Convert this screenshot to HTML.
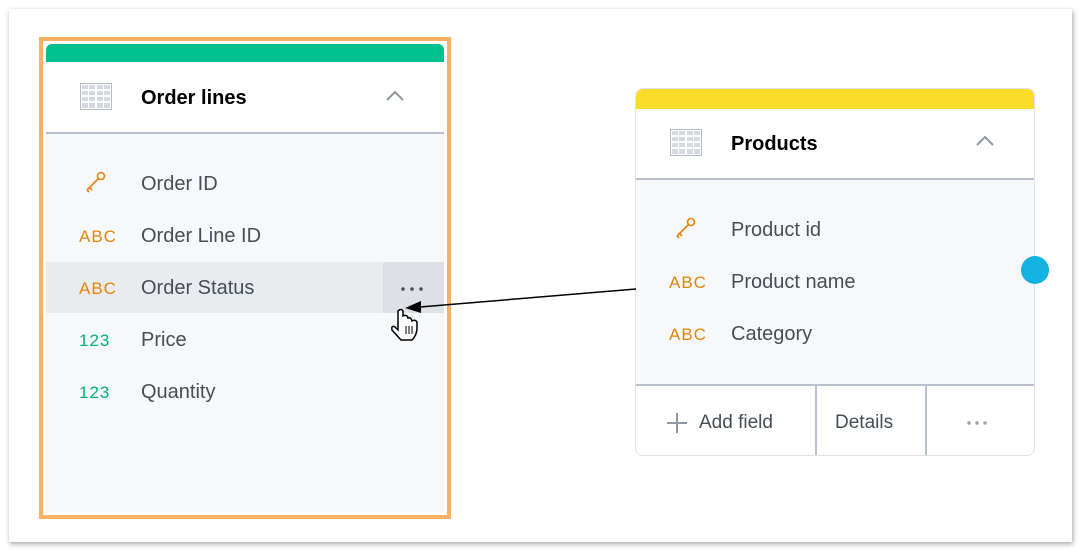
<!DOCTYPE html>
<html><head><style>
body{margin:0;width:1082px;height:552px;background:#fff;position:relative;overflow:hidden;font-family:"Liberation Sans",sans-serif}
.frame{position:absolute;left:9px;top:9px;width:1063px;height:533px;background:#fff;box-shadow:1px 2px 5px rgba(0,0,0,.35)}
.abs{position:absolute}
.t{position:absolute;font-size:20px;color:#464e56}
.ic{position:absolute;font-size:17px;letter-spacing:1px}
.o{color:#e5830d}.g{color:#00b07c}
.h{position:absolute;font-size:20px;font-weight:bold;color:#000}
</style></head><body>
<div class="frame"></div>
<div class="abs" style="left:39px;top:37px;width:404px;height:474px;border:4px solid #fbb163"></div>
<div class="abs" style="left:46px;top:44px;width:398px;height:468px;background:#f7f8fa"></div>
<div class="abs" style="left:46px;top:44px;width:398px;height:20px;background:#00c18d;border-radius:6px 6px 0 0"></div>
<div class="abs" style="left:46px;top:62px;width:398px;height:70px;background:#fff;border-bottom:2px solid #b9c1cf"></div>
<svg class="abs" style="left:80px;top:83px" width="32" height="27"><rect x="0.5" y="0.5" width="31" height="26" fill="#fff" stroke="#b5bdc8"/><g fill="#d5dae1"><rect x="2" y="2" width="6" height="4"/><rect x="9" y="2" width="6" height="4"/><rect x="17" y="2" width="6" height="4"/><rect x="24" y="2" width="6" height="4"/><rect x="2" y="8" width="6" height="4"/><rect x="9" y="8" width="6" height="4"/><rect x="17" y="8" width="6" height="4"/><rect x="24" y="8" width="6" height="4"/><rect x="2" y="14" width="6" height="4"/><rect x="9" y="14" width="6" height="4"/><rect x="17" y="14" width="6" height="4"/><rect x="24" y="14" width="6" height="4"/><rect x="2" y="20" width="6" height="5"/><rect x="9" y="20" width="6" height="5"/><rect x="17" y="20" width="6" height="5"/><rect x="24" y="20" width="6" height="5"/></g></svg>
<div class="h" style="left:141px;top:87px">Order lines</div>
<svg class="abs" style="left:385px;top:89px" width="20" height="14"><path d="M2 11 L10 3 L18 11" fill="none" stroke="#8d96a1" stroke-width="2"/></svg>
<svg class="abs" style="left:84px;top:170px" width="24" height="24"><circle cx="17" cy="6" r="3.5" fill="none" stroke="#e5830d" stroke-width="1.6"/><path d="M14.5 8.5 L3 20 M5.5 17.5 L8 20 M3 20 L5 22" fill="none" stroke="#e5830d" stroke-width="1.6"/></svg>
<div class="t" style="left:141px;top:173px">Order ID</div>
<div class="ic o" style="left:79px;top:227px">ABC</div>
<div class="t" style="left:141px;top:225px">Order Line ID</div>
<div class="abs" style="left:46px;top:262px;width:398px;height:51px;background:#e9ecef"></div>
<div class="abs" style="left:383px;top:262px;width:61px;height:51px;background:#dde1e5"></div>
<svg class="abs" style="left:400px;top:286px" width="26" height="6"><circle cx="3" cy="3" r="1.8" fill="#464e56"/><circle cx="12" cy="3" r="1.8" fill="#464e56"/><circle cx="21" cy="3" r="1.8" fill="#464e56"/></svg>
<div class="ic o" style="left:79px;top:279px">ABC</div>
<div class="t" style="left:141px;top:277px">Order Status</div>
<div class="ic g" style="left:79px;top:331px">123</div>
<div class="t" style="left:141px;top:329px">Price</div>
<div class="ic g" style="left:79px;top:383px">123</div>
<div class="t" style="left:141px;top:381px">Quantity</div>
<div class="abs" style="left:635px;top:88px;width:398px;height:366px;border:1px solid #dfe3e9;border-radius:8px;background:#f7f8fa;overflow:hidden">
 <div class="abs" style="left:0;top:0;width:398px;height:20px;background:#fadd2a"></div>
 <div class="abs" style="left:0;top:20px;width:398px;height:69px;background:#fff;border-bottom:2px solid #b9c1cf"></div>
 <div class="abs" style="left:0;top:295px;width:398px;height:71px;background:#fff;border-top:2px solid #b9c1cf"></div>
 <div class="abs" style="left:179px;top:297px;width:2px;height:70px;background:#b9c1cf"></div>
 <div class="abs" style="left:289px;top:297px;width:2px;height:70px;background:#b9c1cf"></div>
</div>
<svg class="abs" style="left:670px;top:129px" width="32" height="27"><rect x="0.5" y="0.5" width="31" height="26" fill="#fff" stroke="#b5bdc8"/><g fill="#d5dae1"><rect x="2" y="2" width="6" height="4"/><rect x="9" y="2" width="6" height="4"/><rect x="17" y="2" width="6" height="4"/><rect x="24" y="2" width="6" height="4"/><rect x="2" y="8" width="6" height="4"/><rect x="9" y="8" width="6" height="4"/><rect x="17" y="8" width="6" height="4"/><rect x="24" y="8" width="6" height="4"/><rect x="2" y="14" width="6" height="4"/><rect x="9" y="14" width="6" height="4"/><rect x="17" y="14" width="6" height="4"/><rect x="24" y="14" width="6" height="4"/><rect x="2" y="20" width="6" height="5"/><rect x="9" y="20" width="6" height="5"/><rect x="17" y="20" width="6" height="5"/><rect x="24" y="20" width="6" height="5"/></g></svg>
<div class="h" style="left:731px;top:133px">Products</div>
<svg class="abs" style="left:975px;top:134px" width="20" height="14"><path d="M2 11 L10 3 L18 11" fill="none" stroke="#8d96a1" stroke-width="2"/></svg>
<svg class="abs" style="left:674px;top:216px" width="24" height="24"><circle cx="17" cy="6" r="3.5" fill="none" stroke="#e5830d" stroke-width="1.6"/><path d="M14.5 8.5 L3 20 M5.5 17.5 L8 20 M3 20 L5 22" fill="none" stroke="#e5830d" stroke-width="1.6"/></svg>
<div class="t" style="left:731px;top:219px">Product id</div>
<div class="ic o" style="left:669px;top:273px">ABC</div>
<div class="t" style="left:731px;top:271px">Product name</div>
<div class="ic o" style="left:669px;top:325px">ABC</div>
<div class="t" style="left:731px;top:323px">Category</div>
<svg class="abs" style="left:666px;top:412px" width="22" height="22"><path d="M11 1 V21 M1 11 H21" stroke="#8d96a1" stroke-width="2"/></svg>
<div class="t" style="left:699px;top:412px;font-size:19px">Add field</div>
<div class="t" style="left:835px;top:412px;font-size:19px">Details</div>
<svg class="abs" style="left:966px;top:420px" width="24" height="6"><circle cx="3" cy="3" r="1.7" fill="#9aa3ad"/><circle cx="11" cy="3" r="1.7" fill="#9aa3ad"/><circle cx="19" cy="3" r="1.7" fill="#9aa3ad"/></svg>
<div class="abs" style="left:1021px;top:256px;width:28px;height:28px;border-radius:50%;background:#14b2e2"></div>
<svg class="abs" style="left:0;top:0" width="1082" height="552"><line x1="636" y1="289" x2="420" y2="307" stroke="#000" stroke-width="1.5"/><path d="M405 308 L421 301 L421 313 Z" fill="#000"/>
<path d="M398 313 L398 330 L395 327 Q391 325 392 330 L401 340 L412 340 Q417 335 417 328 L417 322 Q415 319 412 321 Q411 317 408 318 Q407 314 403 316 L403 311 Q401 308 398 311 Z" fill="#fff" stroke="#000" stroke-width="1.5"/><path d="M406 326 V334 M409 326 V334 M412 326 V334" stroke="#000" stroke-width="1"/></svg>
</body></html>
